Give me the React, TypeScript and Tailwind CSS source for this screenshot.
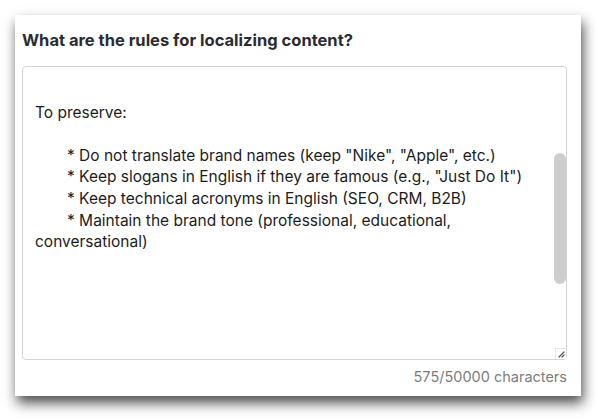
const bullets = [
  '* Do not translate brand names (keep "Nike", "Apple", etc.)',
  '* Keep slogans in English if they are famous (e.g., "Just Do It")',
  "* Keep technical acronyms in English (SEO, CRM, B2B)",
  "* Maintain the brand tone (professional, educational, conversational)",
];

function ResizeGrip() {
  return (
    <div className="absolute bottom-0 right-0 flex h-[11px] w-[11px] items-center justify-center border-l border-t border-[#e6e6e6] bg-white">
      <svg width="7" height="7" viewBox="0 0 7 7">
        <path d="M6 1 L1 6 M6 4 L4 6" stroke="#555" strokeWidth="1.2" strokeLinecap="round" />
      </svg>
    </div>
  );
}

export default function App() {
  return (
    <div className="min-h-[418px] w-[596px] bg-white pl-[15px] pt-[15px] font-['Inter',sans-serif]">
      <div className="flex h-[381px] w-[566px] flex-col bg-white pb-[8px] pl-[7px] pr-[14px] pt-[16px] shadow-[2px_7px_12px_rgba(0,0,0,0.7)]">
        <h2 className="text-[16.5px] font-bold leading-[18px] text-[#2b2b33]">
          What are the rules for localizing content?
        </h2>

        <div className="relative mt-[17px] h-[294px] rounded-[4px] border border-[#d4d4d4] bg-white">
          <div className="h-full overflow-hidden pl-3 pr-6 pt-[13px] text-[15.5px] leading-[21.6px] text-[#1c1c1c]">
            <p>&nbsp;</p>
            <p>To preserve:</p>
            <p>&nbsp;</p>
            {bullets.map((line) => (
              <p key={line}>
                <span className="inline-block w-8" />
                {line}
              </p>
            ))}
          </div>

          {/* scrollbar thumb */}
          <div className="absolute right-0 top-[86px] h-[131px] w-[12px] rounded-full bg-[#cdcdcd]" />
          <ResizeGrip />
        </div>

        <div className="mt-[7px] text-right text-[14.5px] leading-[20px] text-[#7d7d7d]">575/50000 characters</div>
      </div>
    </div>
  );
}
